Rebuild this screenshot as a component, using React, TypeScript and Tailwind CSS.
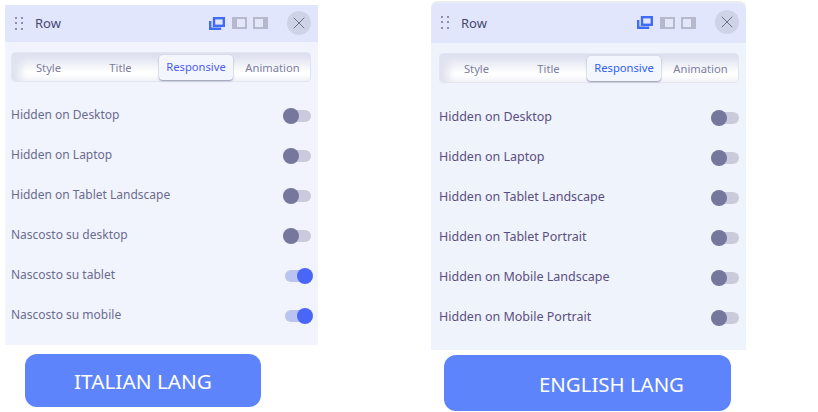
import React from 'react';
import { X } from 'lucide-react';

interface Row {
  label: string;
  on?: boolean;
}

const italianRows: Row[] = [
  { label: 'Hidden on Desktop' },
  { label: 'Hidden on Laptop' },
  { label: 'Hidden on Tablet Landscape' },
  { label: 'Nascosto su desktop' },
  { label: 'Nascosto su tablet', on: true },
  { label: 'Nascosto su mobile', on: true },
];

const englishRows: Row[] = [
  { label: 'Hidden on Desktop' },
  { label: 'Hidden on Laptop' },
  { label: 'Hidden on Tablet Landscape' },
  { label: 'Hidden on Tablet Portrait' },
  { label: 'Hidden on Mobile Landscape' },
  { label: 'Hidden on Mobile Portrait' },
];

const Toggle: React.FC<{ on?: boolean }> = ({ on }) =>
  on ? (
    <div className="relative mt-[2px] h-3 w-[26px] rounded-full bg-[#b9c4f3]">
      <div className="absolute -right-[2px] -top-[2px] h-4 w-4 rounded-full bg-[#4a66f7]" />
    </div>
  ) : (
    <div className="relative mt-[2px] h-3 w-7 rounded-full bg-[#c9cbdd]">
      <div className="absolute left-0 -top-[2px] h-4 w-4 rounded-full bg-[#75779c]" />
    </div>
  );

const LayoutIcons: React.FC = () => (
  <div className="mb-[1px] flex items-center gap-[7px]">
    <svg width="16" height="13" viewBox="0 0 16 13" fill="none" stroke="#3f6bf5" strokeWidth="2.4">
      <rect x="5" y="1.2" width="9.8" height="7.6" />
      <path d="M1.2 4v7.8h11" />
    </svg>
    <svg width="15" height="12" viewBox="0 0 15 12">
      <rect width="15" height="12" fill="#b6b9cb" />
      <rect x="5" y="2" width="8" height="8" fill="#e4e7f9" />
    </svg>
    <svg width="15" height="12" viewBox="0 0 15 12" className="-ml-px">
      <rect width="15" height="12" fill="#b6b9cb" />
      <rect x="2" y="2" width="8" height="8" fill="#e4e7f9" />
    </svg>
  </div>
);

const Panel: React.FC<{
  rows: Row[];
  active: string;
  className: string;
  headerClass: string;
  bodyClass: string;
  rowClass: string;
}> = ({ rows, active, className, headerClass, bodyClass, rowClass }) => (
  <div className={className}>
    <div className={`flex items-center bg-[#e1e6fd] pl-[10px] pr-[7px] ${headerClass}`}>
      <svg width="8" height="14" viewBox="0 0 8 14" fill="#8c90ae">
        <rect x="0" y="0" width="2" height="2" />
        <rect x="6" y="0" width="2" height="2" />
        <rect x="0" y="5" width="2" height="2" />
        <rect x="6" y="5" width="2" height="2" />
        <rect x="0" y="11" width="2" height="2" />
        <rect x="6" y="11" width="2" height="2" />
      </svg>
      <span className="ml-[12px] pt-[1px] text-[13px] text-[#48496f]">Row</span>
      <div className="ml-auto mr-[19px]">
        <LayoutIcons />
      </div>
      <div className="mb-[2px] flex h-6 w-6 items-center justify-center rounded-full bg-[#cfd3e8]">
        <X size={20} strokeWidth={1} className="text-[#5b5d80]" />
      </div>
    </div>
    <div className={`mr-[7px] mt-[10px] flex h-[30px] items-center rounded-[4px] border border-[#e3e6f2] bg-[linear-gradient(to_bottom,#dadded,#ffffff_68%)] text-[11.2px] text-[#7c7e9d] shadow-[inset_8px_0_8px_#dfe2ef] ${bodyClass}`}>
      <span className="w-[73px] pt-[2px] text-center">Style</span>
      <span className="w-[71px] pt-[2px] text-center">Title</span>
      <span className={`ml-[3px] flex h-[25px] w-[74px] items-center justify-center rounded-[4px] bg-[#f4f6fe] pt-[1px] shadow-[0_1px_2px_#8f93ad] ${active}`}>
        Responsive
      </span>
      <span className="flex-1 pl-[2px] pt-[2px] text-center">Animation</span>
    </div>
    <div className={`mr-[7px] flex flex-col gap-[24px] ${bodyClass} ${rowClass}`}>
      {rows.map((row) => (
        <div key={row.label} className="flex h-4 items-center justify-between">
          <span>{row.label}</span>
          <Toggle on={row.on} />
        </div>
      ))}
    </div>
  </div>
);

export default function App() {
  return (
    <div className="flex h-[412px] w-[818px] overflow-hidden bg-white font-['Noto_Sans',sans-serif]">
      <div className="ml-[5px] w-[313px] pt-[5px]">
        <Panel
          rows={italianRows}
          active="text-[#4a5ef0]"
          className="h-[340px] bg-[#f1f4fd]"
          headerClass="h-[37px]"
          bodyClass="ml-[6px]"
          rowClass="mt-[25px] text-[12px] text-[#6a6c8e]"
        />
        <div className="ml-[20px] mt-[9px] flex h-[53px] w-[236px] items-center justify-center rounded-[12px] bg-[#5e84fc] pt-[2px] text-[20.8px] text-white">
          ITALIAN LANG
        </div>
      </div>
      <div className="ml-[113px] w-[315px] pt-[1px]">
        <Panel
          rows={englishRows}
          active="text-[#2f62f2]"
          className="h-[349px] rounded-t-[6px] border-t-2 border-[#ececec] bg-[#eff3fb]"
          headerClass="h-[40px] rounded-t-[6px]"
          bodyClass="ml-[8px]"
          rowClass="mt-[26px] text-[12.5px] text-[#5a4f80]"
        />
        <div className="ml-[13px] mt-[5px] flex h-[56px] w-[287px] items-center justify-center rounded-[12px] bg-[#5e84fc] pl-[48px] pt-[2px] text-[20.4px] text-white">
          ENGLISH LANG
        </div>
      </div>
    </div>
  );
}
